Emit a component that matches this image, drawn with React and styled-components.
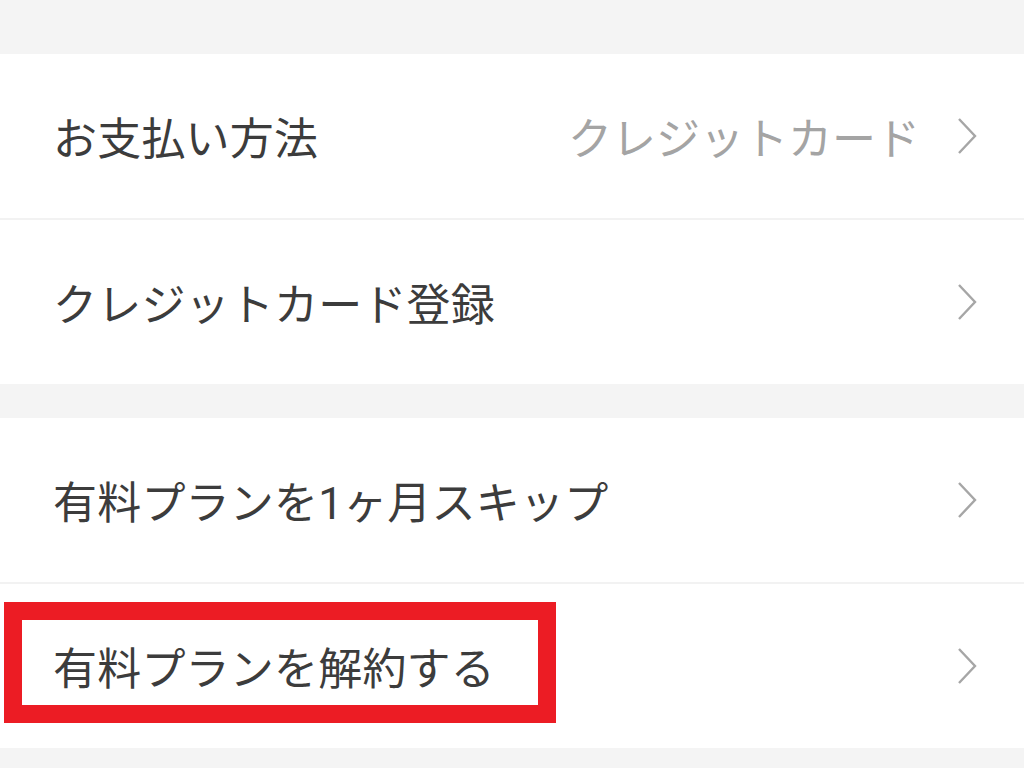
import React from "react";
import styled, { createGlobalStyle } from "styled-components";

const GlobalStyle = createGlobalStyle`
  html, body {
    margin: 0;
    padding: 0;
    background: #f4f4f4;
  }
  body {
    font-family: Roboto, "Noto Sans CJK JP", sans-serif;
  }
`;

const Page = styled.div`
  width: 1024px;
  height: 768px;
  padding-top: 54px;
  box-sizing: border-box;
  background: #f4f4f4;
  overflow: hidden;
`;

const Group = styled.div`
  background: #ffffff;
  margin-bottom: 34px;
`;

const Row = styled.div`
  position: relative;
  height: 164px;
  display: flex;
  align-items: center;
  padding: 0 46px 0 53px;
  border-bottom: ${(p) => (p.last ? "none" : "2px solid #f2f2f2")};
`;

const Label = styled.div`
  flex: 1;
  font-size: 44px;
  color: #3c3c3c;
  letter-spacing: 0.2px;
  white-space: nowrap;
`;

const Value = styled.div`
  font-size: 44px;
  color: #a4a4a4;
  margin-right: 36px;
  white-space: nowrap;
`;

const Highlight = styled.div`
  position: absolute;
  left: 4px;
  top: 18px;
  width: 552px;
  height: 121px;
  box-sizing: border-box;
  border: 18px solid #ec1c24;
  pointer-events: none;
`;

const Chevron = () => (
  <svg width="22" height="38" viewBox="0 0 22 38">
    <polyline
      points="3,2 19,19 3,36"
      fill="none"
      stroke="#a6a6a6"
      strokeWidth="2.4"
    />
  </svg>
);

const Item = ({ label, value, last, marked }) => (
  <Row last={last}>
    <Label>{label}</Label>
    {value && <Value>{value}</Value>}
    <Chevron />
    {marked && <Highlight />}
  </Row>
);

export default function App() {
  return (
    <Page>
      <GlobalStyle />
      <Group>
        <Item label="お支払い方法" value="クレジットカード" />
        <Item label="クレジットカード登録" last />
      </Group>
      <Group>
        <Item label="有料プランを1ヶ月スキップ" />
        <Item label="有料プランを解約する" last marked />
      </Group>
    </Page>
  );
}
